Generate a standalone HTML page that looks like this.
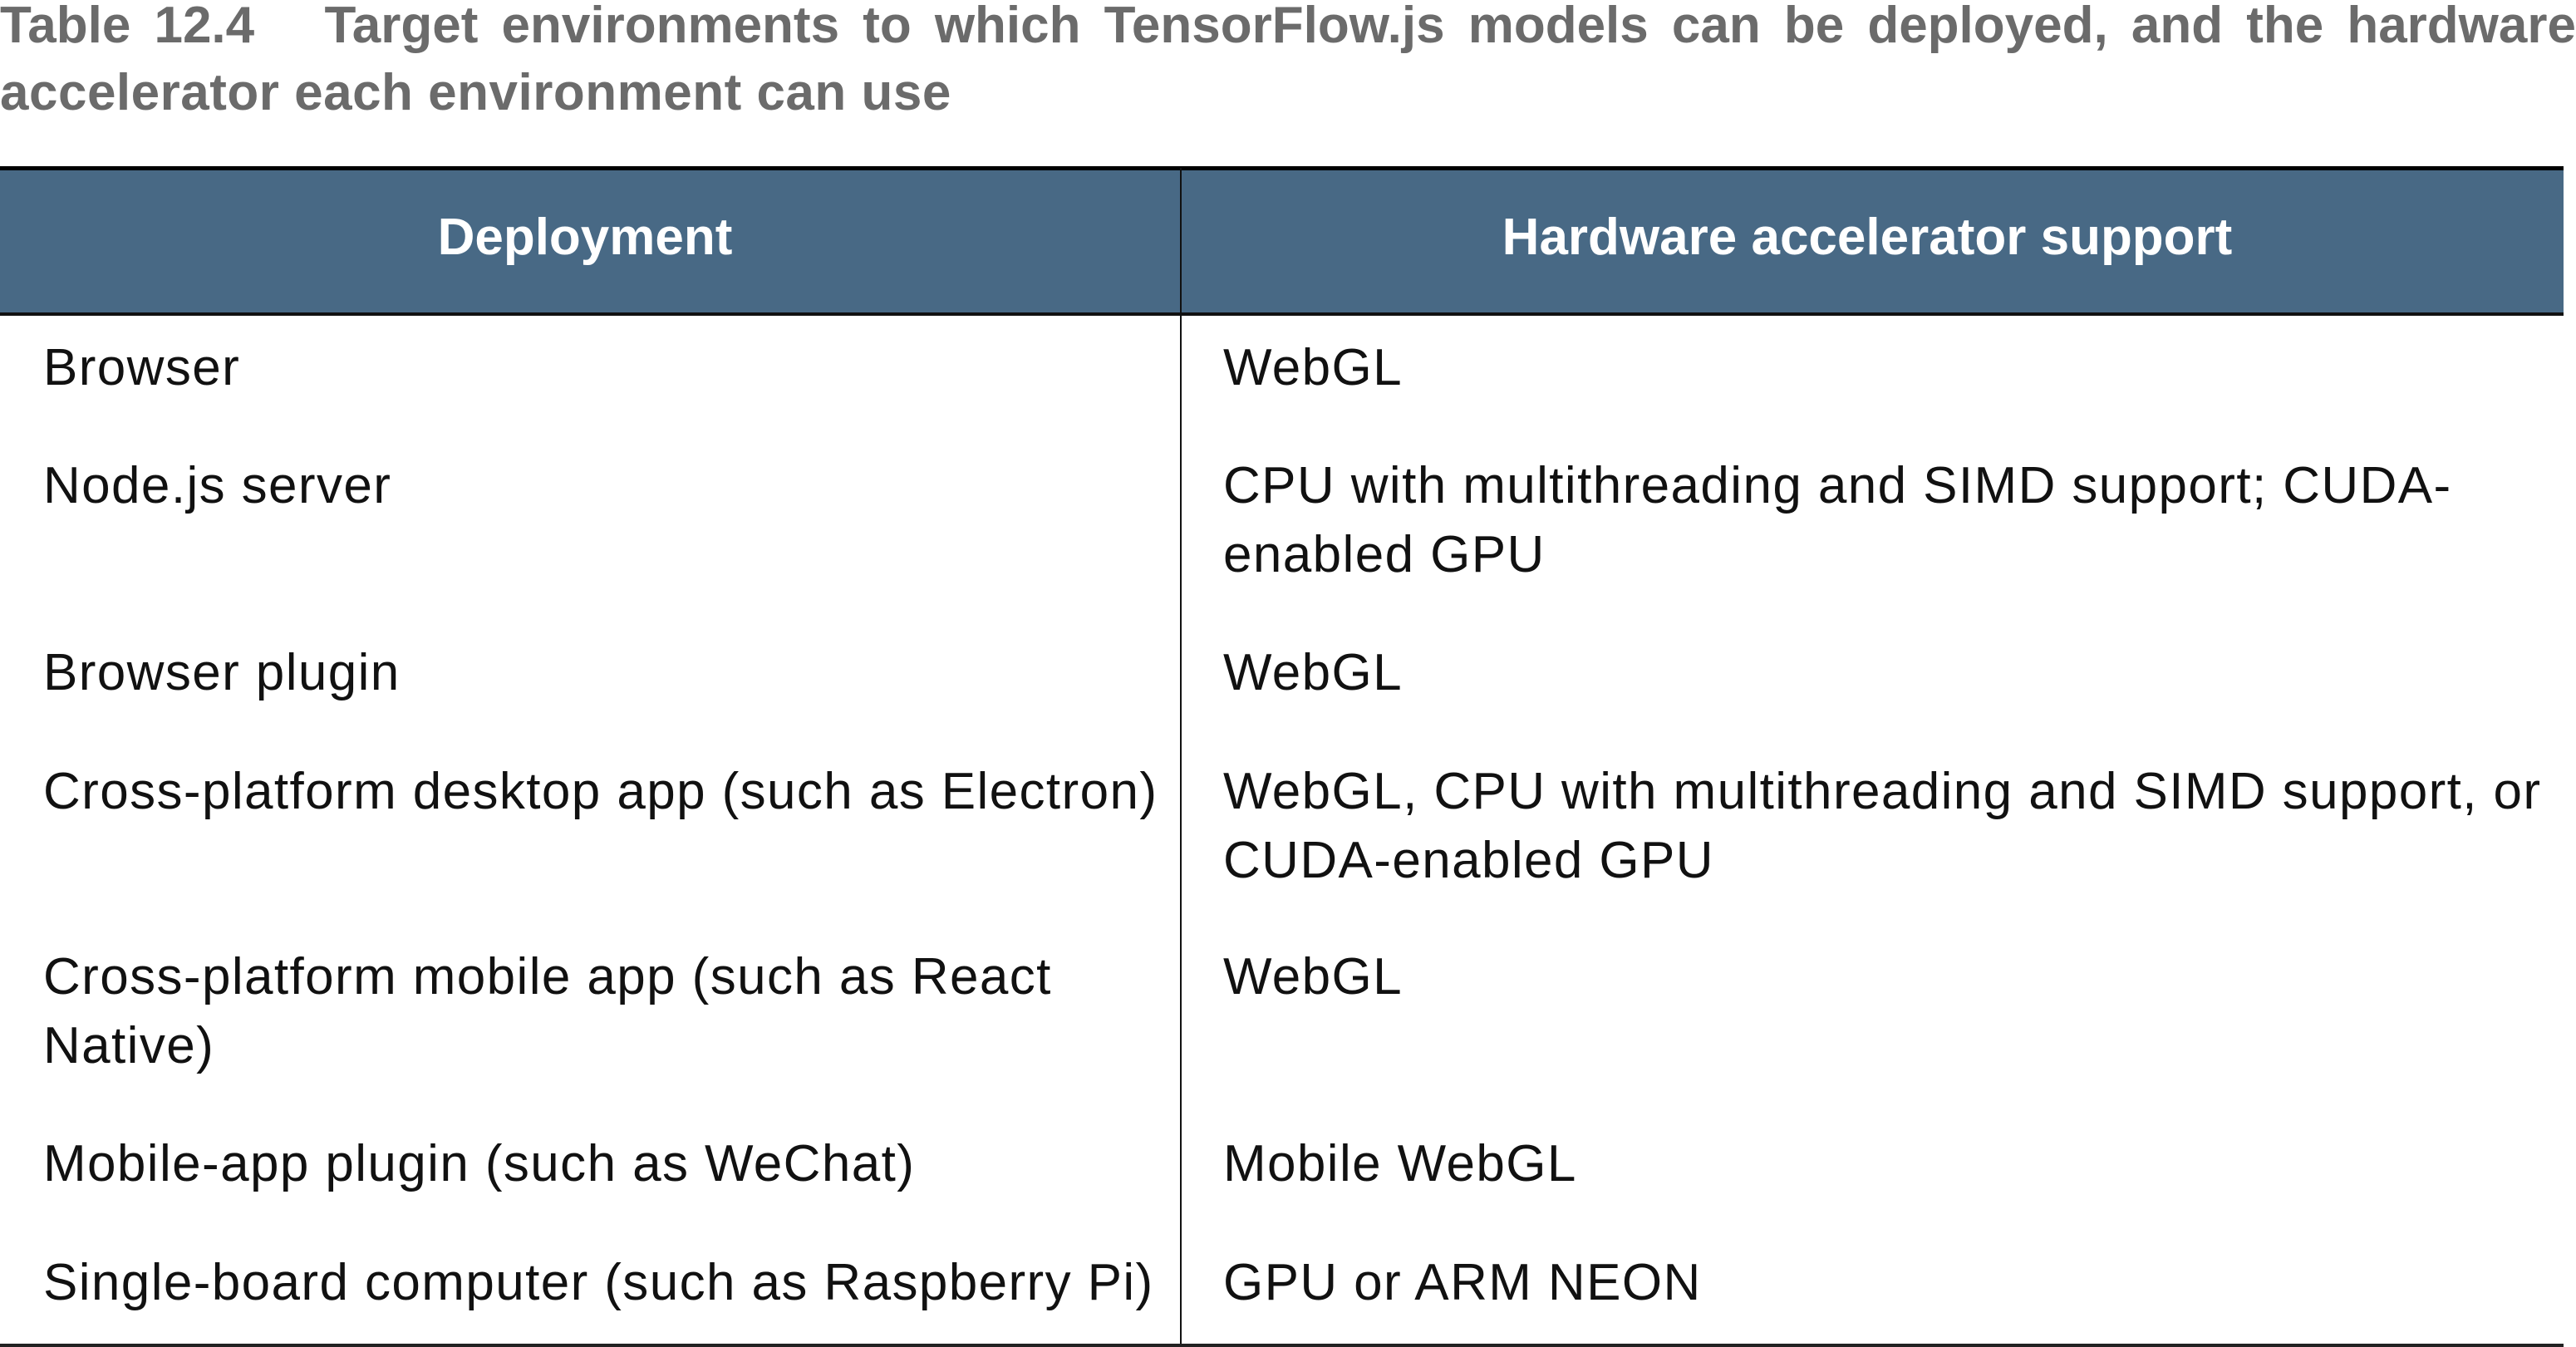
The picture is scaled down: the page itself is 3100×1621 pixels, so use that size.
<!DOCTYPE html>
<html><head><meta charset="utf-8"><style>
html,body{margin:0;padding:0;background:#fff;width:3100px;height:1621px;overflow:hidden;position:relative;font-family:"Liberation Sans",sans-serif;}
.t{position:absolute;left:0;width:3100px;font-weight:bold;color:#6b6b6b;font-size:62px;line-height:83px;}
.c{position:absolute;font-size:62px;line-height:83px;color:#111;white-space:nowrap;letter-spacing:1.4px;}
.h{position:absolute;top:202px;height:176px;background:#486985;}
.ht{position:absolute;color:#fff;font-weight:bold;font-size:62px;top:244px;line-height:83px;text-align:center;}
</style></head><body>
<div class="t" style="top:-11px;text-align:justify;text-align-last:justify;">Table 12.4&nbsp;&nbsp; Target environments to which TensorFlow.js models can be deployed, and the hardware</div>
<div class="t" style="top:70px;letter-spacing:0.5px;">accelerator each environment can use</div>

<div class="h" style="left:0;width:3085px;"></div>
<div style="position:absolute;left:0;top:200px;width:3085px;height:5px;background:#000"></div>
<div style="position:absolute;left:0;top:376px;width:3085px;height:4px;background:#111"></div>
<div style="position:absolute;left:1420px;top:202px;width:2px;height:1418px;background:#111"></div>
<div style="position:absolute;left:0;top:1617px;width:3085px;height:4px;background:#222"></div>
<div class="ht" style="left:0;width:1408px;">Deployment</div>
<div class="ht" style="left:1422px;width:1650px;">Hardware accelerator support</div>

<div class="c" style="left:52px;top:401px">Browser</div>
<div class="c" style="left:1472px;top:401px">WebGL</div>
<div class="c" style="left:52px;top:543px">Node.js server</div>
<div class="c" style="left:1472px;top:543px">CPU with multithreading and SIMD support; CUDA-<br>enabled GPU</div>
<div class="c" style="left:52px;top:768px">Browser plugin</div>
<div class="c" style="left:1472px;top:768px">WebGL</div>
<div class="c" style="left:52px;top:911px">Cross-platform desktop app (such as Electron)</div>
<div class="c" style="left:1472px;top:911px">WebGL, CPU with multithreading and SIMD support, or<br>CUDA-enabled GPU</div>
<div class="c" style="left:52px;top:1134px">Cross-platform mobile app (such as React<br>Native)</div>
<div class="c" style="left:1472px;top:1134px">WebGL</div>
<div class="c" style="left:52px;top:1359px">Mobile-app plugin (such as WeChat)</div>
<div class="c" style="left:1472px;top:1359px">Mobile WebGL</div>
<div class="c" style="left:52px;top:1502px">Single-board computer (such as Raspberry Pi)</div>
<div class="c" style="left:1472px;top:1502px">GPU or ARM NEON</div>
</body></html>
